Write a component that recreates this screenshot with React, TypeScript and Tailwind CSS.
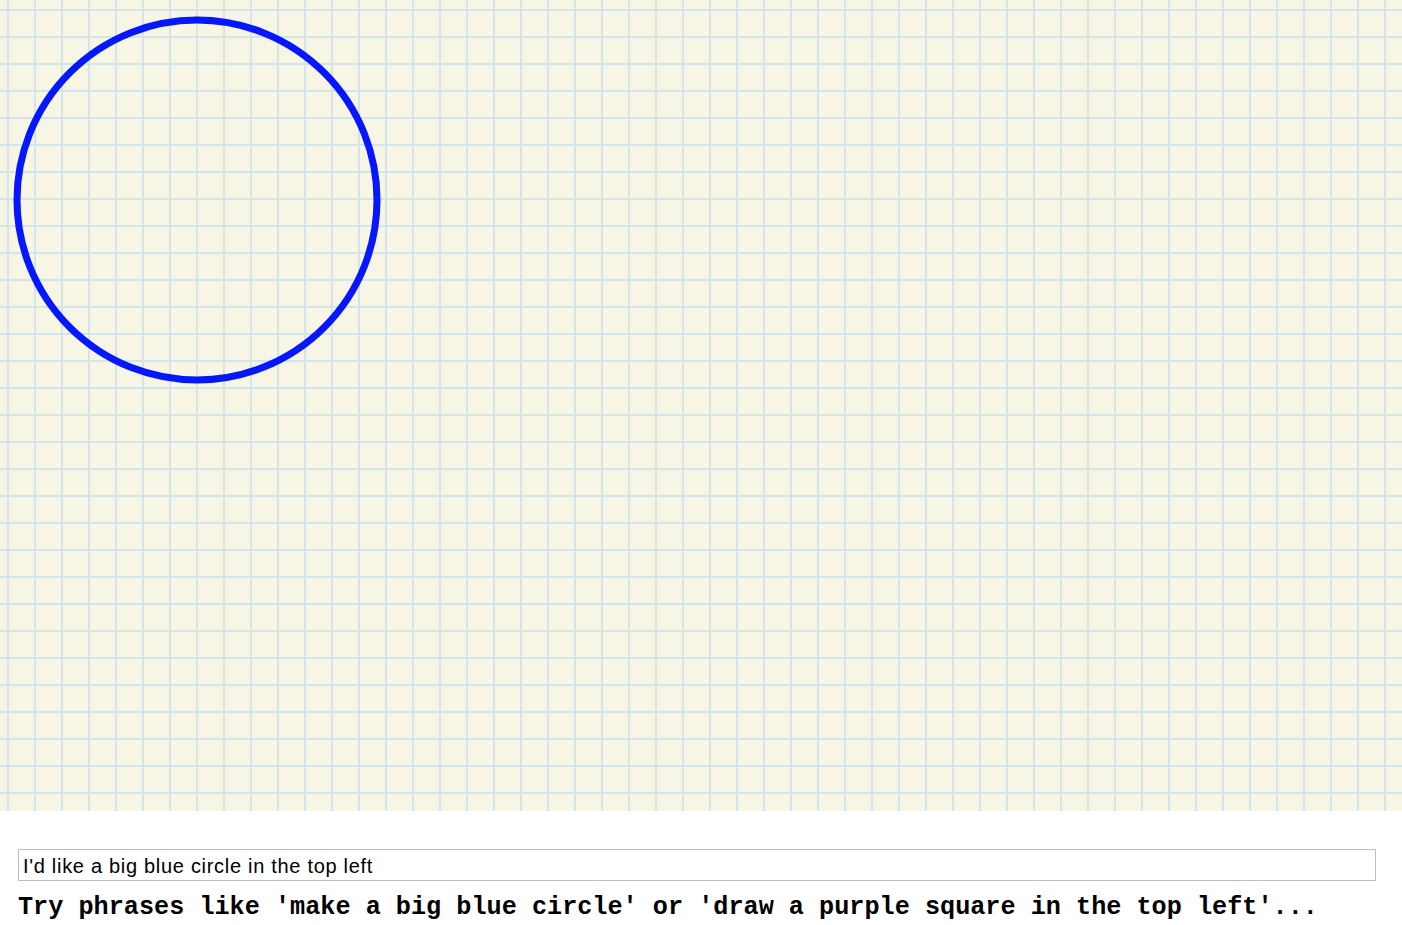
import React from "react";

// Sketch canvas: cream graph paper with the shapes drawn on top
function Canvas() {
  return (
    <div className="relative h-[811px] w-full bg-[#f7f5e3] bg-[image:linear-gradient(to_right,#d2e5ea_2px,transparent_2px),linear-gradient(to_bottom,#d2e5ea_2px,transparent_2px)] bg-[size:27px_27px] bg-[position:7px_9px]">
      <svg className="absolute inset-0" width="1402" height="811" viewBox="0 0 1402 811">
        <circle cx="197" cy="200" r="180" fill="none" stroke="#0517ff" strokeWidth="7" />
      </svg>
    </div>
  );
}

export default function App() {
  return (
    <div className="min-h-[925px] w-[1402px] bg-white">
      <Canvas />
      <div className="px-[18px] pt-[38px]">
        <input
          className="block h-[32px] w-[1358px] border border-[#bdbdbd] px-[4px] pt-[2px] font-['Liberation_Sans',Arial,sans-serif] text-[20px] tracking-[0.7px] text-black outline-none"
          defaultValue="I'd like a big blue circle in the top left"
        />
        <p className="mt-[12px] font-['Liberation_Mono','Courier_New',monospace] text-[25.2px] leading-[30px] font-bold text-black whitespace-pre">
          Try phrases like 'make a big blue circle' or 'draw a purple square in the top left'...
        </p>
      </div>
    </div>
  );
}
